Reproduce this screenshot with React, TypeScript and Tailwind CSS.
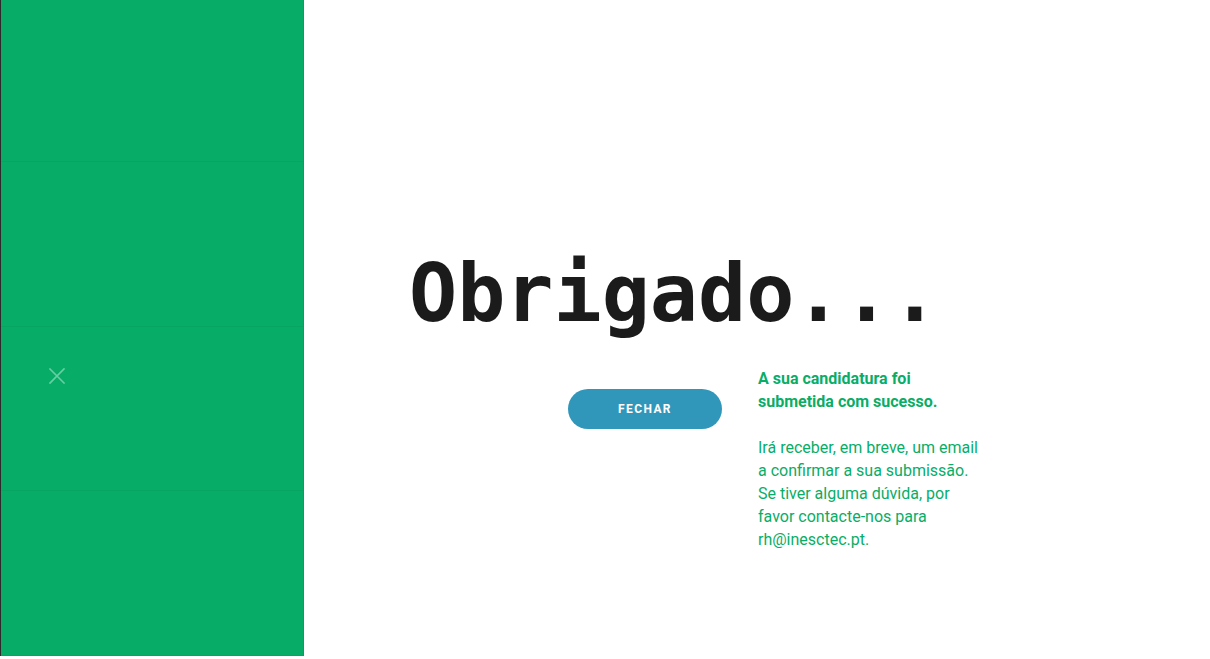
import React from "react";

export default function App() {
  return (
    <div className="flex w-[1210px] h-[659px] bg-white overflow-hidden" style={{ fontFamily: "Roboto, 'Liberation Sans', sans-serif" }}>
      <aside className="w-[304px] h-[656px] shrink-0 bg-[#07ad67] border-l border-l-[#2b2b2b] border-r border-r-[#079f60] flex flex-col">
        <div className="h-[162px] border-b border-b-[#08a462]" />
        <div className="h-[165px] border-b border-b-[#08a462]" />
        <div className="h-[164px] border-b border-b-[#08a462] pl-[47px] pt-[40px]">
          <svg width="18" height="18" viewBox="0 0 18 18" fill="none" stroke="rgba(255,255,255,0.4)" strokeWidth="1.6" strokeLinecap="square">
            <path d="M2 2 L16 16 M16 2 L2 16" />
          </svg>
        </div>
        <div className="flex-1 border-b border-b-[#08a462]" />
      </aside>
      <main className="flex-1 flex flex-col pt-[254px] pl-[105px]">
        <h1
          className="text-[80px] leading-[80px] font-bold text-[#1b1b1b] m-0"
          style={{ fontFamily: "'DejaVu Sans Mono', 'Liberation Mono', monospace" }}
        >
          Obrigado...
        </h1>
        <div className="flex mt-[32px] pl-[1px]">
          <div className="w-[158px] shrink-0" />
          <div className="pt-[23px]">
            <button className="w-[154px] h-[40px] rounded-full bg-[#3097bb] text-white text-[12px] font-bold tracking-[1.4px]">
              FECHAR
            </button>
          </div>
          <div className="ml-[36px] text-[16px] leading-[23px] text-[#09ad67] pt-[1px]">
            <p className="font-bold">
              A sua candidatura foi
              <br />
              submetida com sucesso.
            </p>
            <p className="mt-[23px]">
              Irá receber, em breve, um email
              <br />
              a confirmar a sua submissão.
              <br />
              Se tiver alguma dúvida, por
              <br />
              favor contacte-nos para
              <br />
              rh@inesctec.pt.
            </p>
          </div>
        </div>
      </main>
    </div>
  );
}
